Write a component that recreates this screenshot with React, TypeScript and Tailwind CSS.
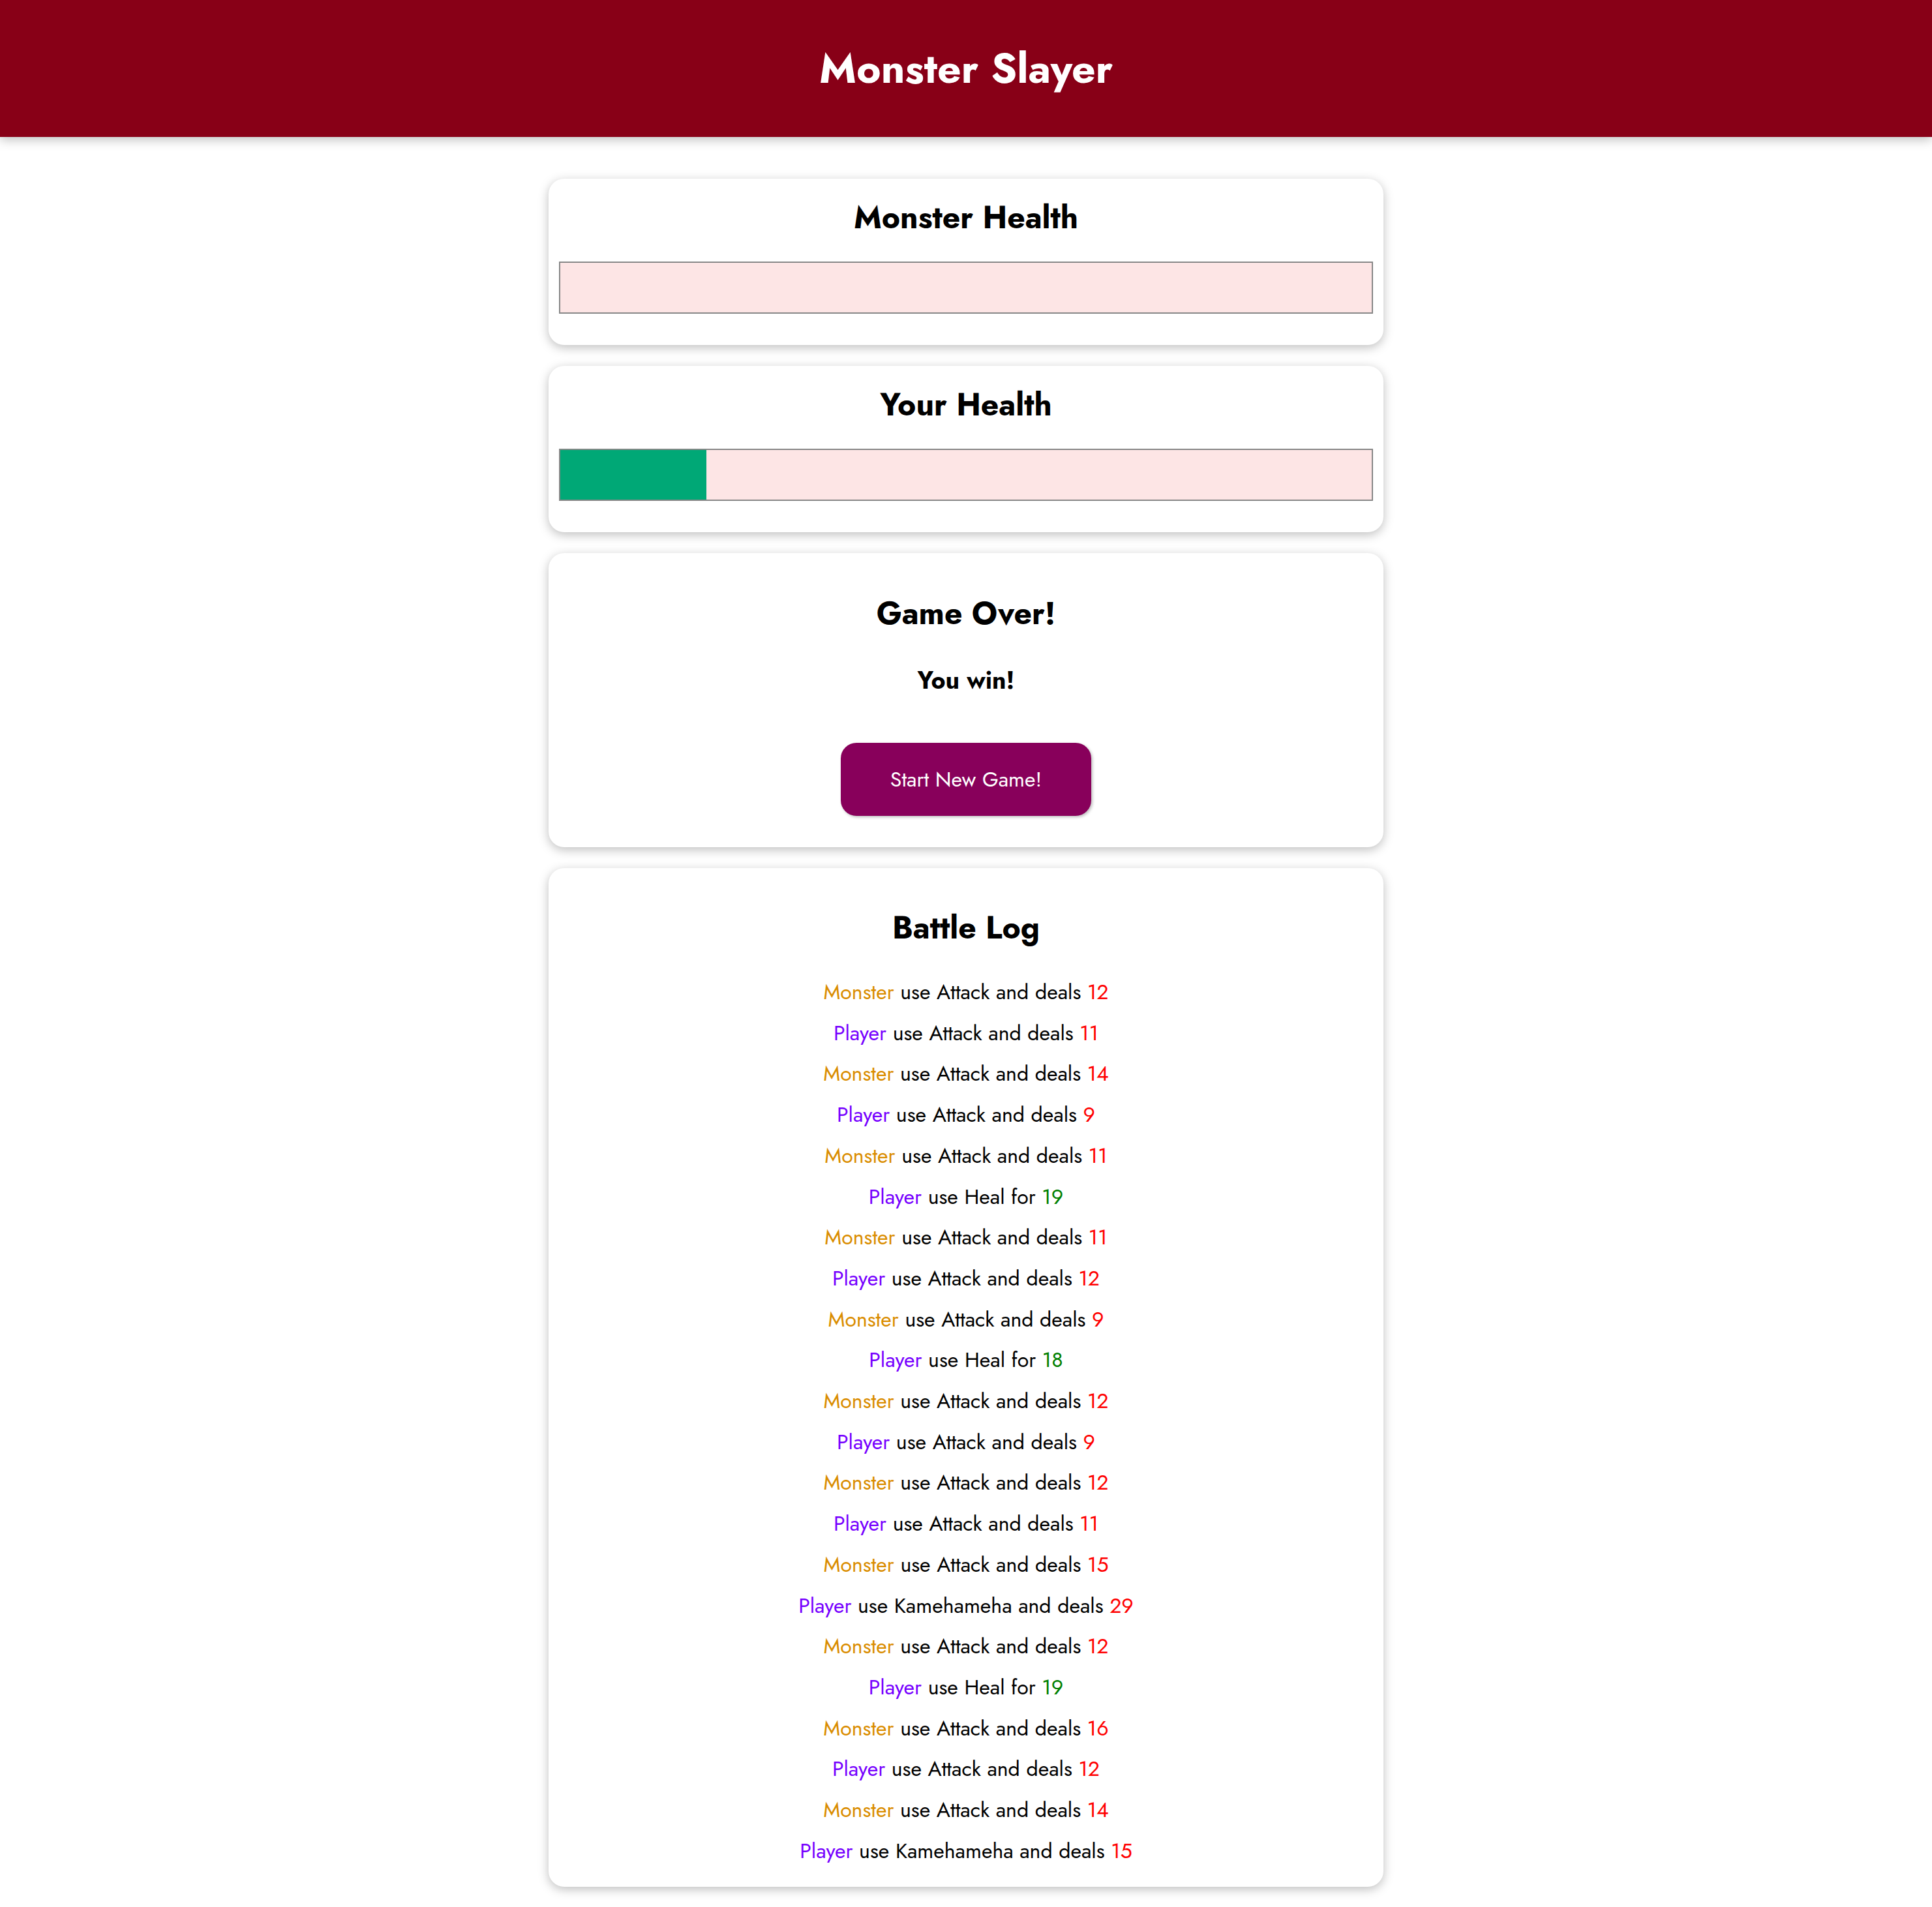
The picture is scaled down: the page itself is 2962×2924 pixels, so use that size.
type LogEntry = {
  who: 'Monster' | 'Player';
  action: string;
  value: number;
};

const log: LogEntry[] = [
  { who: 'Monster', action: 'Attack', value: 12 },
  { who: 'Player', action: 'Attack', value: 11 },
  { who: 'Monster', action: 'Attack', value: 14 },
  { who: 'Player', action: 'Attack', value: 9 },
  { who: 'Monster', action: 'Attack', value: 11 },
  { who: 'Player', action: 'Heal', value: 19 },
  { who: 'Monster', action: 'Attack', value: 11 },
  { who: 'Player', action: 'Attack', value: 12 },
  { who: 'Monster', action: 'Attack', value: 9 },
  { who: 'Player', action: 'Heal', value: 18 },
  { who: 'Monster', action: 'Attack', value: 12 },
  { who: 'Player', action: 'Attack', value: 9 },
  { who: 'Monster', action: 'Attack', value: 12 },
  { who: 'Player', action: 'Attack', value: 11 },
  { who: 'Monster', action: 'Attack', value: 15 },
  { who: 'Player', action: 'Kamehameha', value: 29 },
  { who: 'Monster', action: 'Attack', value: 12 },
  { who: 'Player', action: 'Heal', value: 19 },
  { who: 'Monster', action: 'Attack', value: 16 },
  { who: 'Player', action: 'Attack', value: 12 },
  { who: 'Monster', action: 'Attack', value: 14 },
  { who: 'Player', action: 'Kamehameha', value: 15 },
];

function HealthCard({ title, value }: { title: string; value: number }) {
  return (
    <section className="rounded-[24px] bg-white p-4 text-center shadow-[0_4px_16px_rgba(0,0,0,0.26)]">
      <h2 className="mt-[9px] text-[48px] font-bold leading-[70px]">{title}</h2>
      <div className="my-8 h-[80px] border-2 border-[#878787] bg-[#fde5e5]">
        <div className="h-full bg-[#00a876]" style={{ width: `${value}%` }} />
      </div>
    </section>
  );
}

export default function App() {
  return (
    <div className="min-h-screen bg-white pb-8 font-['Jost','Lato',sans-serif] text-black">
      <header className="mb-16 bg-[#880017] py-4 text-center text-white shadow-[0_4px_16px_rgba(0,0,0,0.26)]">
        <h1 className="my-[42px] text-[64px] font-bold leading-[94px]">Monster Slayer</h1>
      </header>

      <div className="mx-auto flex w-[90%] max-w-[1280px] flex-col gap-8">
        <HealthCard title="Monster Health" value={0} />
        <HealthCard title="Your Health" value={18} />

        <section className="rounded-[24px] bg-white p-4 text-center shadow-[0_4px_16px_rgba(0,0,0,0.26)]">
          <h2 className="mt-[42px] mb-10 text-[48px] font-bold leading-[70px]">Game Over!</h2>
          <h3 className="mb-[35px] text-[37.44px] font-bold leading-[55px]">You win!</h3>
          <div className="pt-[33px] pb-[32px]">
            <button className="h-[112px] w-[384px] cursor-pointer rounded-[24px] border-2 border-[#88005b] bg-[#88005b] text-[32px] text-white shadow-[2px_2px_4px_rgba(0,0,0,0.26)]">
              Start New Game!
            </button>
          </div>
        </section>

        <section className="rounded-[24px] bg-white p-4 text-center shadow-[0_4px_16px_rgba(0,0,0,0.26)]">
          <h2 className="mt-[41px] mb-10 text-[48px] font-bold leading-[70px]">Battle Log</h2>
          <ul className="mb-4 space-y-4">
            {log.map((entry, i) => (
              <li key={i} className="text-[32px] leading-[46.7px]">
                <span className={entry.who === 'Player' ? 'text-[#7700ff]' : 'text-[#da8d00]'}>
                  {entry.who}
                </span>
                {entry.action === 'Heal' ? (
                  <>
                    {' '}use Heal for <span className="text-[green]">{entry.value}</span>
                  </>
                ) : (
                  <>
                    {' '}use {entry.action} and deals <span className="text-[red]">{entry.value}</span>
                  </>
                )}
              </li>
            ))}
          </ul>
        </section>
      </div>
    </div>
  );
}
